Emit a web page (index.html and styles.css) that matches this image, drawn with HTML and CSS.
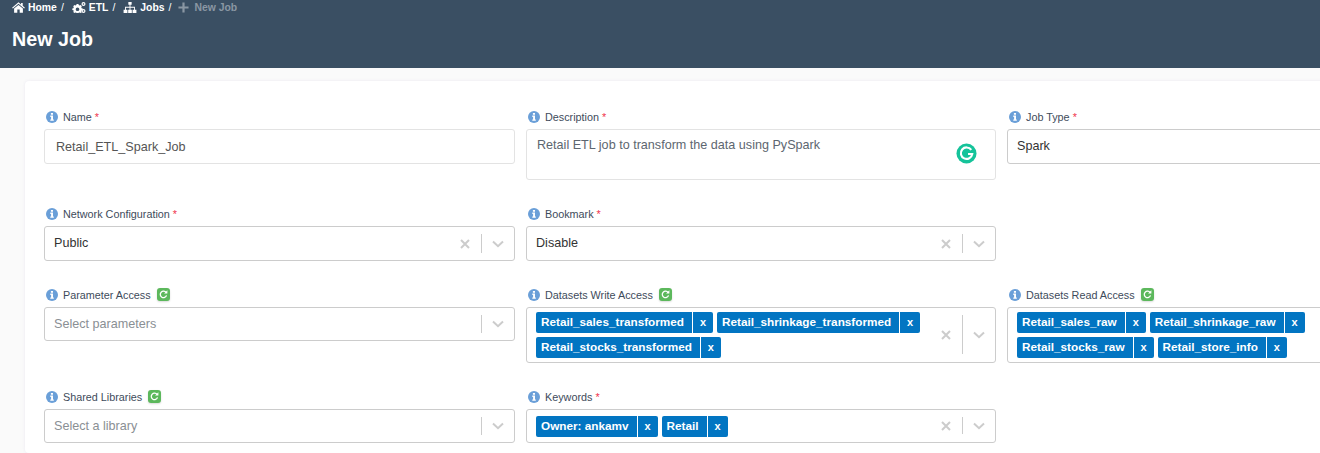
FILE: index.html
```html
<!DOCTYPE html>
<html>
<head>
    <title>New Job</title>
    <meta name="viewport" content="width=device-width, initial-scale=1.0">
    <link rel="stylesheet" href="styles.css">
</head>
<body>

<svg class="sprite" xmlns="http://www.w3.org/2000/svg">
    <symbol id="i-home" viewBox="0 0 14 12">
        <path d="M7 0.2 L0 6.2 L0.9 7.2 L7 2 L13.1 7.2 L14 6.2 L11.6 4.1 V1 H9.8 V2.6 Z"/>
        <path d="M7 3.2 L2.2 7.2 V11.8 H5.7 V8.2 H8.3 V11.8 H11.8 V7.2 Z"/>
    </symbol>
    <symbol id="i-cogs" viewBox="-1 0 15 12">
        <path fill-rule="evenodd" d="M3.9 2.2 H5.9 L6.2 3.4 L7.2 3.9 L8.3 3.3 L9.6 4.7 L9 5.7 L9.4 6.7 L10.6 7 V8.9 L9.4 9.2 L9 10.2 L9.6 11.2 L8.3 12 L7.2 11.4 L6.2 11.8 L5.9 12 H3.9 L3.6 11.8 L2.6 11.4 L1.5 12 L0.2 10.8 L0.8 9.8 L0.4 8.9 L-0.8 8.6 V7 L0.4 6.7 L0.8 5.7 L0.2 4.7 L1.5 3.3 L2.6 3.9 L3.6 3.4 Z M4.9 5.9 A2 2 0 1 0 4.9 9.9 A2 2 0 1 0 4.9 5.9 Z"/>
        <path fill-rule="evenodd" d="M11.4 0 A2.2 2.2 0 1 0 11.4 4.4 A2.2 2.2 0 1 0 11.4 0 Z M11.4 1.3 A0.9 0.9 0 1 1 11.4 3.1 A0.9 0.9 0 1 1 11.4 1.3 Z"/>
        <path fill-rule="evenodd" d="M11.4 7.6 A2.2 2.2 0 1 0 11.4 12 A2.2 2.2 0 1 0 11.4 7.6 Z M11.4 8.9 A0.9 0.9 0 1 1 11.4 10.7 A0.9 0.9 0 1 1 11.4 8.9 Z"/>
    </symbol>
    <symbol id="i-sitemap" viewBox="0 0 14 12">
        <path d="M5.2 0 H8.8 V3 H7.5 V5.2 H12.4 V8.4 H14 V12 H9.8 V8.4 H11.4 V6.2 H7.5 V8.4 H9 V12 H5 V8.4 H6.5 V6.2 H2.6 V8.4 H4.2 V12 H0 V8.4 H1.6 V5.2 H6.5 V3 H5.2 Z"/>
    </symbol>
    <symbol id="i-plus" viewBox="0 0 12 12">
        <path d="M4.8 0.5 H7.2 V4.8 H11.5 V7.2 H7.2 V11.5 H4.8 V7.2 H0.5 V4.8 H4.8 Z"/>
    </symbol>
    <symbol id="i-info" viewBox="0 0 12 12">
        <circle cx="6" cy="6" r="6" fill="#6a9fd8"/>
        <path fill="#fff" d="M4.9 2.1 H7 V3.7 H4.9 Z M4.3 4.6 H7 V8.4 H7.8 V9.8 H4.3 V8.4 H5.1 V6 H4.3 Z"/>
    </symbol>
    <symbol id="i-refresh" viewBox="0 0 12 12">
        <path fill="none" stroke="#fff" stroke-width="1.4" d="M8.9 4 A3.5 3.5 0 1 0 9.3 7"/>
        <path fill="#fff" d="M10.2 1.4 V5 H6.6 Z"/>
    </symbol>
    <symbol id="i-clear" viewBox="0 0 10 10">
        <path fill="none" stroke="currentColor" stroke-width="2" d="M1 1 L9 9 M9 1 L1 9"/>
    </symbol>
    <symbol id="i-chevron" viewBox="0 0 12 8">
        <path fill="none" stroke="currentColor" stroke-width="2" d="M1 1.5 L6 6.2 L11 1.5"/>
    </symbol>
</svg>

<div class="page-header">
    <div class="breadcrumb">
        <svg class="crumb-icon"><use href="#i-home"/></svg><a>Home</a><span class="sep">/</span>
        <svg class="crumb-icon crumb-cogs"><use href="#i-cogs"/></svg><a>ETL</a><span class="sep">/</span>
        <svg class="crumb-icon crumb-sitemap"><use href="#i-sitemap"/></svg><a>Jobs</a><span class="sep">/</span>
        <svg class="crumb-icon crumb-plus"><use href="#i-plus"/></svg><span class="current">New Job</span>
    </div>
    <h1>New Job</h1>
</div>

<div class="content">
    <div class="card">
        <div class="form-grid">

            <div class="field">
                <label><svg class="info"><use href="#i-info"/></svg>Name <span class="req">*</span></label>
                <div class="text-input name-input">Retail_ETL_Spark_Job</div>
            </div>

            <div class="field">
                <label><svg class="info"><use href="#i-info"/></svg>Description <span class="req">*</span></label>
                <div class="text-area">
                    Retail ETL job to transform the data using PySpark
                    <svg class="grammarly" viewBox="0 0 22 22">
                        <circle cx="11" cy="11" r="10.5" fill="#15c39a"/>
                        <path fill="none" stroke="#fff" stroke-width="2.2" d="M16 7.2 A6 6 0 1 0 17 11.6 H12.6"/>
                    </svg>
                </div>
            </div>

            <div class="field">
                <label><svg class="info"><use href="#i-info"/></svg>Job Type <span class="req">*</span></label>
                <div class="text-input job-type"><span class="nudge">Spark</span></div>
            </div>

            <div class="field">
                <label><svg class="info"><use href="#i-info"/></svg>Network Configuration <span class="req">*</span></label>
                <div class="select">
                    <div class="select-value">Public</div>
                    <svg class="clear"><use href="#i-clear"/></svg>
                    <div class="divider"></div>
                    <svg class="chevron"><use href="#i-chevron"/></svg>
                </div>
            </div>

            <div class="field">
                <label><svg class="info"><use href="#i-info"/></svg>Bookmark <span class="req">*</span></label>
                <div class="select">
                    <div class="select-value">Disable</div>
                    <svg class="clear"><use href="#i-clear"/></svg>
                    <div class="divider"></div>
                    <svg class="chevron"><use href="#i-chevron"/></svg>
                </div>
            </div>

            <div class="field"></div>

            <div class="field">
                <label><svg class="info"><use href="#i-info"/></svg>Parameter Access <span class="refresh"><svg><use href="#i-refresh"/></svg></span></label>
                <div class="select short">
                    <div class="select-value placeholder">Select parameters</div>
                    <div class="divider"></div>
                    <svg class="chevron"><use href="#i-chevron"/></svg>
                </div>
            </div>

            <div class="field">
                <label><svg class="info"><use href="#i-info"/></svg>Datasets Write Access <span class="refresh"><svg><use href="#i-refresh"/></svg></span></label>
                <div class="select multi">
                    <div class="tags">
                        <div class="tag"><span class="tag-text">Retail_sales_transformed</span><span class="tag-x">x</span></div>
                        <div class="tag"><span class="tag-text">Retail_shrinkage_transformed</span><span class="tag-x">x</span></div>
                        <div class="tag"><span class="tag-text">Retail_stocks_transformed</span><span class="tag-x">x</span></div>
                    </div>
                    <svg class="clear"><use href="#i-clear"/></svg>
                    <div class="divider"></div>
                    <svg class="chevron"><use href="#i-chevron"/></svg>
                </div>
            </div>

            <div class="field">
                <label><svg class="info"><use href="#i-info"/></svg>Datasets Read Access <span class="refresh"><svg><use href="#i-refresh"/></svg></span></label>
                <div class="select multi">
                    <div class="tags">
                        <div class="tag"><span class="tag-text">Retail_sales_raw</span><span class="tag-x">x</span></div>
                        <div class="tag"><span class="tag-text">Retail_shrinkage_raw</span><span class="tag-x">x</span></div>
                        <div class="tag"><span class="tag-text">Retail_stocks_raw</span><span class="tag-x">x</span></div>
                        <div class="tag"><span class="tag-text">Retail_store_info</span><span class="tag-x">x</span></div>
                    </div>
                    <svg class="clear"><use href="#i-clear"/></svg>
                    <div class="divider"></div>
                    <svg class="chevron"><use href="#i-chevron"/></svg>
                </div>
            </div>

            <div class="field">
                <label><svg class="info"><use href="#i-info"/></svg>Shared Libraries <span class="refresh"><svg><use href="#i-refresh"/></svg></span></label>
                <div class="select short">
                    <div class="select-value placeholder">Select a library</div>
                    <div class="divider"></div>
                    <svg class="chevron"><use href="#i-chevron"/></svg>
                </div>
            </div>

            <div class="field">
                <label><svg class="info"><use href="#i-info"/></svg>Keywords <span class="req">*</span></label>
                <div class="select multi short">
                    <div class="tags">
                        <div class="tag"><span class="tag-text">Owner: ankamv</span><span class="tag-x">x</span></div>
                        <div class="tag"><span class="tag-text">Retail</span><span class="tag-x">x</span></div>
                    </div>
                    <svg class="clear"><use href="#i-clear"/></svg>
                    <div class="divider"></div>
                    <svg class="chevron"><use href="#i-chevron"/></svg>
                </div>
            </div>

        </div>
    </div>
</div>

</body>
</html>
```

FILE: styles.css
```css
html, body {
    margin: 0;
    height: 453px;
    overflow: hidden;
}
body {
    font-family: "Liberation Sans", Arial, sans-serif;
    background-color: #fafafa;
    color: #3e4b5b;
}
.sprite {
    display: none;
}
.page-header {
    height: 68px;
    box-sizing: border-box;
    background-color: #3a4f63;
    padding-left: 12px;
}
.breadcrumb {
    display: flex;
    align-items: center;
    height: 14px;
    font-size: 10.4px;
    font-weight: bold;
    color: #fff;
}
.crumb-icon {
    width: 13px;
    height: 11px;
    margin-right: 3px;
    fill: #fff;
}
.crumb-cogs {
    width: 14px;
    margin-left: 1px;
}
.crumb-sitemap {
    width: 14px;
    margin-left: 1px;
}
.crumb-plus {
    width: 11px;
    margin-right: 5px;
    fill: #8a97a3;
}
.sep {
    font-weight: normal;
    margin: 0 7px 0 4px;
}
.current {
    color: #8a97a3;
}
h1 {
    margin: 14px 0 0 0;
    font-size: 19.7px;
    line-height: 22px;
    color: #fff;
}
.content {
    padding: 13px 0 0 25px;
}
.card {
    width: 1500px;
    height: 372px;
    box-sizing: border-box;
    background-color: #fff;
    border-radius: 4px;
    box-shadow: 0 0 3px rgba(120, 100, 180, 0.12);
    padding: 29px 0 0 19px;
}
.form-grid {
    display: grid;
    grid-template-columns: 471px 470px 471px;
    column-gap: 11px;
    row-gap: 27px;
}
label {
    display: flex;
    align-items: center;
    height: 19px;
    box-sizing: border-box;
    padding-bottom: 6px;
    font-size: 10.8px;
    color: #3e4b5b;
    white-space: pre;
}
.info {
    width: 12px;
    height: 12px;
    margin: 0 5px 0 2px;
}
.req {
    color: #f0324b;
}
.refresh {
    display: flex;
    align-items: center;
    justify-content: center;
    width: 13px;
    height: 13px;
    margin-left: 3px;
    border-radius: 3px;
    background-color: #5cb85c;
    box-shadow: 0 1px 2px rgba(0, 0, 0, 0.15);
}
.refresh svg {
    width: 11px;
    height: 11px;
}
.text-input {
    height: 35px;
    box-sizing: border-box;
    border: 1px solid #e3e3e3;
    border-radius: 3px;
    padding-left: 11px;
    display: flex;
    align-items: center;
    font-size: 12.6px;
    color: #555;
}
.job-type {
    border-color: #ccc;
    color: #333;
    padding-left: 9px;
}
.nudge {
    padding-bottom: 2px;
}
.text-area {
    height: 51px;
    box-sizing: border-box;
    border: 1px solid #e3e3e3;
    border-radius: 3px;
    padding: 7px 10px;
    font-size: 12.6px;
    line-height: 16px;
    color: #5d6670;
    position: relative;
}
.grammarly {
    position: absolute;
    right: 18px;
    top: 13px;
    width: 21px;
    height: 21px;
}
.select {
    min-height: 35px;
    box-sizing: border-box;
    border: 1px solid #ccc;
    border-radius: 3px;
    display: flex;
    align-items: center;
    font-size: 12.6px;
    color: #333;
    padding-right: 10px;
}
.short {
    min-height: 34px;
}
.select-value {
    flex: 1;
    padding: 0 0 2px 9px;
}
.select-value.placeholder {
    padding-bottom: 0;
    color: #8a8f94;
}
.clear {
    width: 10px;
    height: 10px;
    color: #ccc;
    margin-right: 11px;
}
.divider {
    width: 1px;
    align-self: stretch;
    background-color: #ccc;
    margin: 7px 10px 7px 0;
}
.multi .divider {
    margin-top: 7px;
    margin-bottom: 8px;
}
.chevron {
    width: 12px;
    height: 8px;
    color: #ccc;
}
.tags {
    flex: 1;
    display: flex;
    flex-wrap: wrap;
    gap: 4px;
    padding: 4px 9px;
}
.tag {
    display: flex;
    height: 21px;
    line-height: 20px;
    border-radius: 2px;
    background-color: #0275c2;
    color: #fff;
    font-size: 11.75px;
    font-weight: bold;
}
.tag-text {
    padding: 0 8px 0 5px;
}
.tag-x {
    width: 20px;
    text-align: center;
    border-left: 1px solid #fff;
    font-size: 11px;
}
```
